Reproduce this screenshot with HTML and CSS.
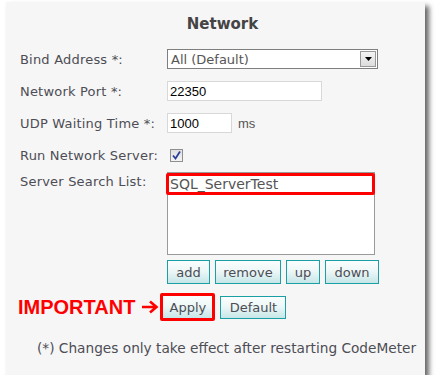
FILE: index.html
```html
<!DOCTYPE html>
<html lang="en">
<head>
    <meta charset="UTF-8">
    <title>Network</title>
    <link rel="stylesheet" href="styles.css">
</head>
<body>
    <div class="panel">
        <h2>Network</h2>
        <div class="form">
            <label>Bind Address *:</label>
            <div class="field">
                <div class="select">
                    <span>All (Default)</span>
                    <span class="drop"><svg width="7" height="4" viewBox="0 0 7 4"><path d="M0 0h7L3.5 4z" fill="#000"/></svg></span>
                </div>
            </div>

            <label>Network Port *:</label>
            <div class="field"><div class="input port">22350</div></div>

            <label>UDP Waiting Time *:</label>
            <div class="field"><div class="input udp">1000</div><span class="unit">ms</span></div>

            <label>Run Network Server:</label>
            <div class="field">
                <span class="check"><svg width="11" height="11" viewBox="0 0 11 11"><path d="M2 5.5l2.5 3L9 1.5" fill="none" stroke="#2a3f9a" stroke-width="1.8"/></svg></span>
            </div>

            <label class="top">Server Search List:</label>
            <div class="listcol">
                <div class="listbox">
                    <div class="item">SQL_ServerTest</div>
                </div>
                <div class="btnrow">
                    <button class="btn add">add</button>
                    <button class="btn remove">remove</button>
                    <button class="btn up">up</button>
                    <button class="btn down">down</button>
                </div>
            </div>
        </div>

        <div class="actions">
            <span class="important">IMPORTANT</span>
            <svg class="arrow" width="17" height="14" viewBox="0 0 17 14"><path d="M0 7h14M8 1.5L14.5 7 8 12.5" fill="none" stroke="#ff0000" stroke-width="2.6"/></svg>
            <button class="btn apply">Apply</button>
            <button class="btn default">Default</button>
        </div>

        <p class="note">(*) Changes only take effect after restarting CodeMeter</p>
    </div>
</body>
</html>
```

FILE: styles.css
```css
/* Network settings panel */
body {
    margin: 0;
    background-color: #fff;
    font-family: "DejaVu Sans", Verdana, sans-serif;
    font-size: 13px;
    color: #4d4d55;
}
.panel {
    margin: 2px 0 0 6px;
    width: 405px;
    height: 373px;
    padding-left: 14px;
    background-color: #f6f6f6;
    box-shadow: 4px 4px 5px rgba(0, 0, 0, 0.6);
    overflow: hidden;
}
h2 {
    margin: 0;
    padding-top: 13px;
    height: 26px;
    text-align: center;
    font-size: 15px;
    font-weight: bold;
    color: #444;
}
.form {
    display: grid;
    grid-template-columns: 147px 1fr;
    grid-template-rows: 32px 32px 32px 32px auto;
    margin-top: 2px;
}
.form label {
    display: flex;
    align-items: center;
    letter-spacing: 0.2px;
}
.form label.top {
    align-items: flex-start;
    padding-top: 3px;
}
.field {
    display: flex;
    align-items: center;
}
.select {
    width: 206px;
    height: 18px;
    border: 1px solid #7f7f7f;
    background-color: #fff;
    display: flex;
    align-items: center;
    justify-content: space-between;
    padding-left: 3px;
    color: #555;
}
.drop {
    width: 14px;
    height: 14px;
    margin-right: 1px;
    border: 1px solid #999;
    background: linear-gradient(#f4f4f4, #dcdcdc);
    display: flex;
    align-items: center;
    justify-content: center;
}
.input {
    height: 18px;
    border: 1px solid #d8d8d8;
    background-color: #fff;
    font-family: "Liberation Sans", Arial, sans-serif;
    font-size: 13px;
    color: #000;
    padding-left: 2px;
    display: flex;
    align-items: center;
}
.port {
    width: 151px;
}
.udp {
    width: 61px;
}
.unit {
    margin-left: 6px;
    font-family: "Liberation Sans", Arial, sans-serif;
    font-size: 13px;
    color: #555;
}
.check {
    margin-left: 3px;
    width: 11px;
    height: 11px;
    border: 1px solid #8f8f8f;
    background: linear-gradient(#e0e0e0, #f4f4f4);
    display: flex;
}
.listcol {
    padding-top: 1px;
}
.listbox {
    width: 206px;
    height: 81px;
    border: 1px solid #9a9a9a;
    background-color: #fff;
}
.item {
    margin: 0 -1px 0 -2px;
    height: 16px;
    border: 3px solid #f00;
    border-radius: 2px;
    padding-left: 1px;
    font-size: 14px;
    line-height: 16px;
    color: #555;
}
.btnrow {
    display: flex;
    gap: 5px;
    margin-top: 5px;
}
.btn {
    height: 24px;
    border: 1px solid #1aa0a4;
    background: linear-gradient(#fafdfd 0%, #eef7f7 45%, #c6e6e8 100%);
    font-family: "DejaVu Sans", Verdana, sans-serif;
    font-size: 13px;
    color: #4d4d55;
    padding: 0;
}
.add { width: 43px; }
.remove { width: 66px; }
.up { width: 34px; }
.down { width: 54px; }
.actions {
    display: flex;
    align-items: center;
    height: 28px;
    margin-top: 9px;
    margin-left: -2px;
}
.important {
    font-family: "Liberation Sans", Arial, sans-serif;
    font-weight: bold;
    font-size: 20px;
    color: #f00;
}
.arrow {
    margin-left: 7px;
}
.apply {
    margin-left: 1px;
    width: 55px;
    height: 28px;
    border: 3px solid #f00;
    border-radius: 2px;
}
.default {
    margin-left: 5px;
    width: 66px;
    height: 23px;
}
.note {
    margin: 19px 0 0 17px;
    font-size: 13.7px;
    white-space: nowrap;
}
```
